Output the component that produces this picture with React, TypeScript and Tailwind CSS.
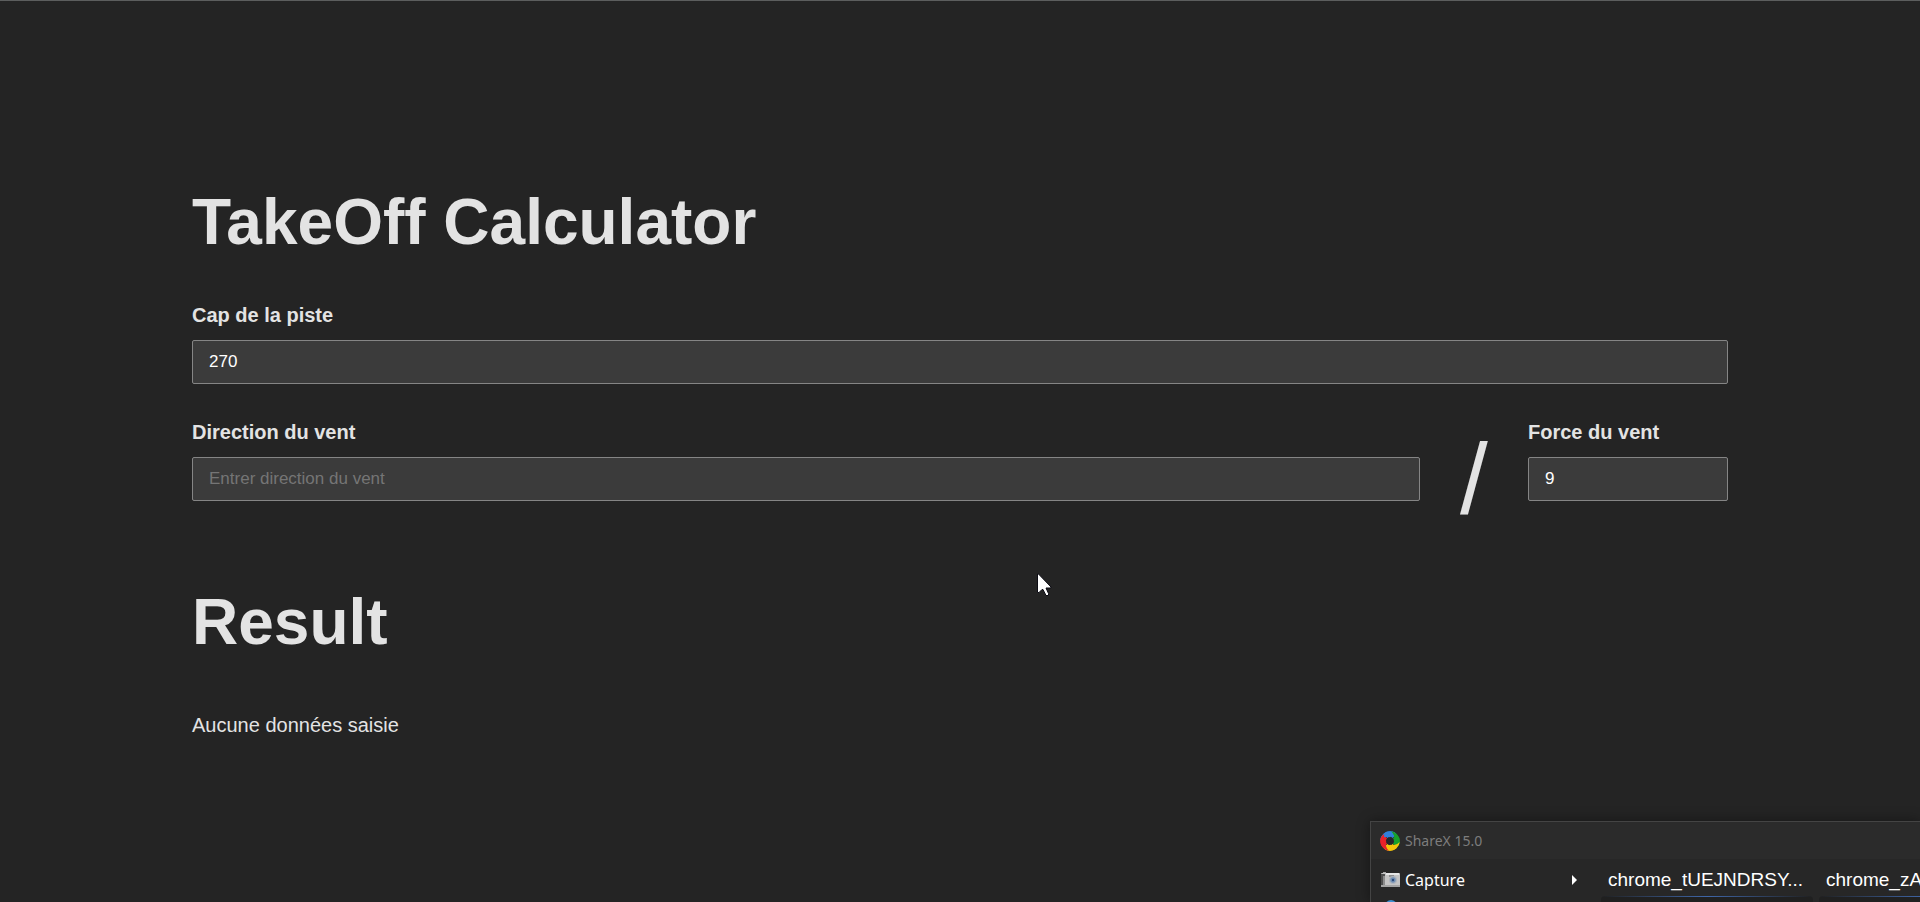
import { useState } from "react";

const fieldClass =
  "h-11 w-full rounded-xs border border-[#858585] bg-[#3b3b3b] px-4 text-[17px] text-white outline-none placeholder:text-[#757575]";

type FieldProps = {
  id: string;
  label: string;
  value: string;
  placeholder: string;
  onChange: (value: string) => void;
};

function Field({ id, label, value, placeholder, onChange }: FieldProps) {
  return (
    <div className="flex flex-col gap-2.5">
      <label htmlFor={id} className="text-xl leading-[30px] font-bold">
        {label}
      </label>
      <input
        id={id}
        type="text"
        inputMode="numeric"
        className={fieldClass}
        value={value}
        placeholder={placeholder}
        onChange={(e) => onChange(e.target.value)}
      />
    </div>
  );
}

const logoArms = [
  { color: "#2f80dc", angle: 0 },
  { color: "#17a02c", angle: 90 },
  { color: "#f5c60a", angle: 180 },
  { color: "#e8222a", angle: 270 },
];

function ShareXLogo() {
  return (
    <svg viewBox="0 0 20 20" className="size-5 shrink-0" aria-hidden="true">
      {logoArms.map(({ color, angle }) => (
        <path
          key={angle}
          d="M5.300 5.300A6 6 0 0 1 14.700 5.300"
          transform={`rotate(${angle} 10 10)`}
          fill="none"
          stroke={color}
          strokeWidth="5.500"
        />
      ))}
      {logoArms.map(({ color, angle }) => (
        <path
          key={angle}
          d="M.3 9A9.700 9.700 0 0 1 10 .3C13.500.3 15.800 1.800 16.800 4.300Q12.500 3.300 9.500 6.300 4.500 4.300.3 9z"
          transform={`rotate(${angle} 10 10)`}
          fill={color}
        />
      ))}
      <circle cx="10" cy="10" r="3.300" fill="#25252b" />
    </svg>
  );
}

function CameraIcon() {
  return (
    <svg viewBox="0 0 20 16" className="h-4 w-5 shrink-0" aria-hidden="true">
      <rect x="3" y="0" width="3" height="2" fill="#a8a8a8" />
      <rect x="1" y="1" width="19" height="14" rx="1" fill="#c4c4c4" />
      <rect x="1" y="2" width="4" height="12" fill="#4e4e4e" />
      <rect x="3" y="4" width="2" height="10" fill="#8c8c8c" />
      <rect x="6" y="1" width="13" height="2" fill="#e6e6e6" />
      <rect x="9" y="3" width="5" height="2" fill="#8f8f8f" />
      <circle cx="13" cy="8" r="4" fill="#aeb4bc" />
      <circle cx="13" cy="8" r="2.700" fill="#7390b5" />
      <circle cx="13" cy="8" r="1.200" fill="#2b4a78" />
      <rect x="1" y="13" width="19" height="2" fill="#a3a3a3" />
    </svg>
  );
}

function Pointer() {
  return (
    <svg viewBox="0 0 16 24" className="h-6 w-4" aria-hidden="true">
      <path
        d="M.5 1v18.500h1.500l3-3h1l3 6h2.500v-2l-2.500-5.500h5v-1L1.500 1z"
        fill="#fff"
        stroke="#0c0c14"
        strokeWidth="1"
      />
    </svg>
  );
}

function RecentCapture({ name }: { name: string }) {
  return (
    <div className="w-[212px] shrink-0">
      <p className="flex h-[37px] items-center pt-1.5 pl-[7px]">{name}</p>
      <div className="h-5 rounded-t-sm bg-[#202020]">
        <div className="h-px bg-linear-to-r from-transparent via-[#3f66a8] to-transparent" />
      </div>
    </div>
  );
}

function ShareXMenu() {
  return (
    <aside className="absolute right-0 bottom-0 h-[81px] w-[550px] overflow-hidden border-t border-l border-[#444] bg-[#272727] font-['Noto_Sans',sans-serif] shadow-[0_0_12px_rgba(0,0,0,0.4)]">
      <header className="flex h-[37px] items-center gap-[5px] bg-[#2b2b2b] pl-[9px] text-sm text-[#7d7d7d]">
        <ShareXLogo />
        <span>ShareX 15.0</span>
      </header>
      <div className="flex whitespace-nowrap text-white">
        <div className="w-[230px] shrink-0">
          <button type="button" className="flex h-[41px] w-full items-center gap-[5px] pl-[9px] text-base">
            <CameraIcon />
            <span>Capture</span>
            <svg viewBox="0 0 5 10" className="mr-6 ml-auto h-2.5 w-[5px]" aria-hidden="true">
              <path d="M0 0v10l5-5z" fill="#fff" />
            </svg>
          </button>
          <div className="ml-[14px] h-3 w-3 rounded-full bg-[#3f8fd0]" />
        </div>
        <div className="flex gap-[6px] font-['Liberation_Sans',Arial,sans-serif] text-[19px]">
          <RecentCapture name="chrome_tUEJNDRSY..." />
          <RecentCapture name="chrome_zA" />
        </div>
      </div>
    </aside>
  );
}

export default function App() {
  const [heading, setHeading] = useState("270");
  const [direction, setDirection] = useState("");
  const [force, setForce] = useState("9");

  return (
    <div className="relative min-h-screen overflow-hidden border-t border-[#5c5e5e] bg-[#242424] font-['Liberation_Sans',Arial,sans-serif] text-[#e3e3e3]">
      <main className="px-[10%] pt-[186px] pb-40">
        <h1 className="mb-[43px] text-[64px] leading-[70px] font-bold">TakeOff Calculator</h1>
        <form className="flex flex-col gap-[33px]">
          <Field
            id="runway"
            label="Cap de la piste"
            value={heading}
            placeholder="Entrer cap de la piste"
            onChange={setHeading}
          />
          <div className="flex gap-10">
            <div className="grow">
              <Field
                id="direction"
                label="Direction du vent"
                value={direction}
                placeholder="Entrer direction du vent"
                onChange={setDirection}
              />
            </div>
            <span className="flex h-11 w-7 items-center self-end text-[100px] leading-none">/</span>
            <div className="w-[200px]">
              <Field
                id="force"
                label="Force du vent"
                value={force}
                placeholder="Entrer force"
                onChange={setForce}
              />
            </div>
          </div>
        </form>
        <h2 className="mt-[86px] text-[64px] leading-[70px] font-bold">Result</h2>
        <p className="mt-[53px] text-xl leading-[30px]">Aucune données saisie</p>
      </main>
      <div className="absolute top-[572px] left-[1037px]">
        <Pointer />
      </div>
      <ShareXMenu />
    </div>
  );
}
